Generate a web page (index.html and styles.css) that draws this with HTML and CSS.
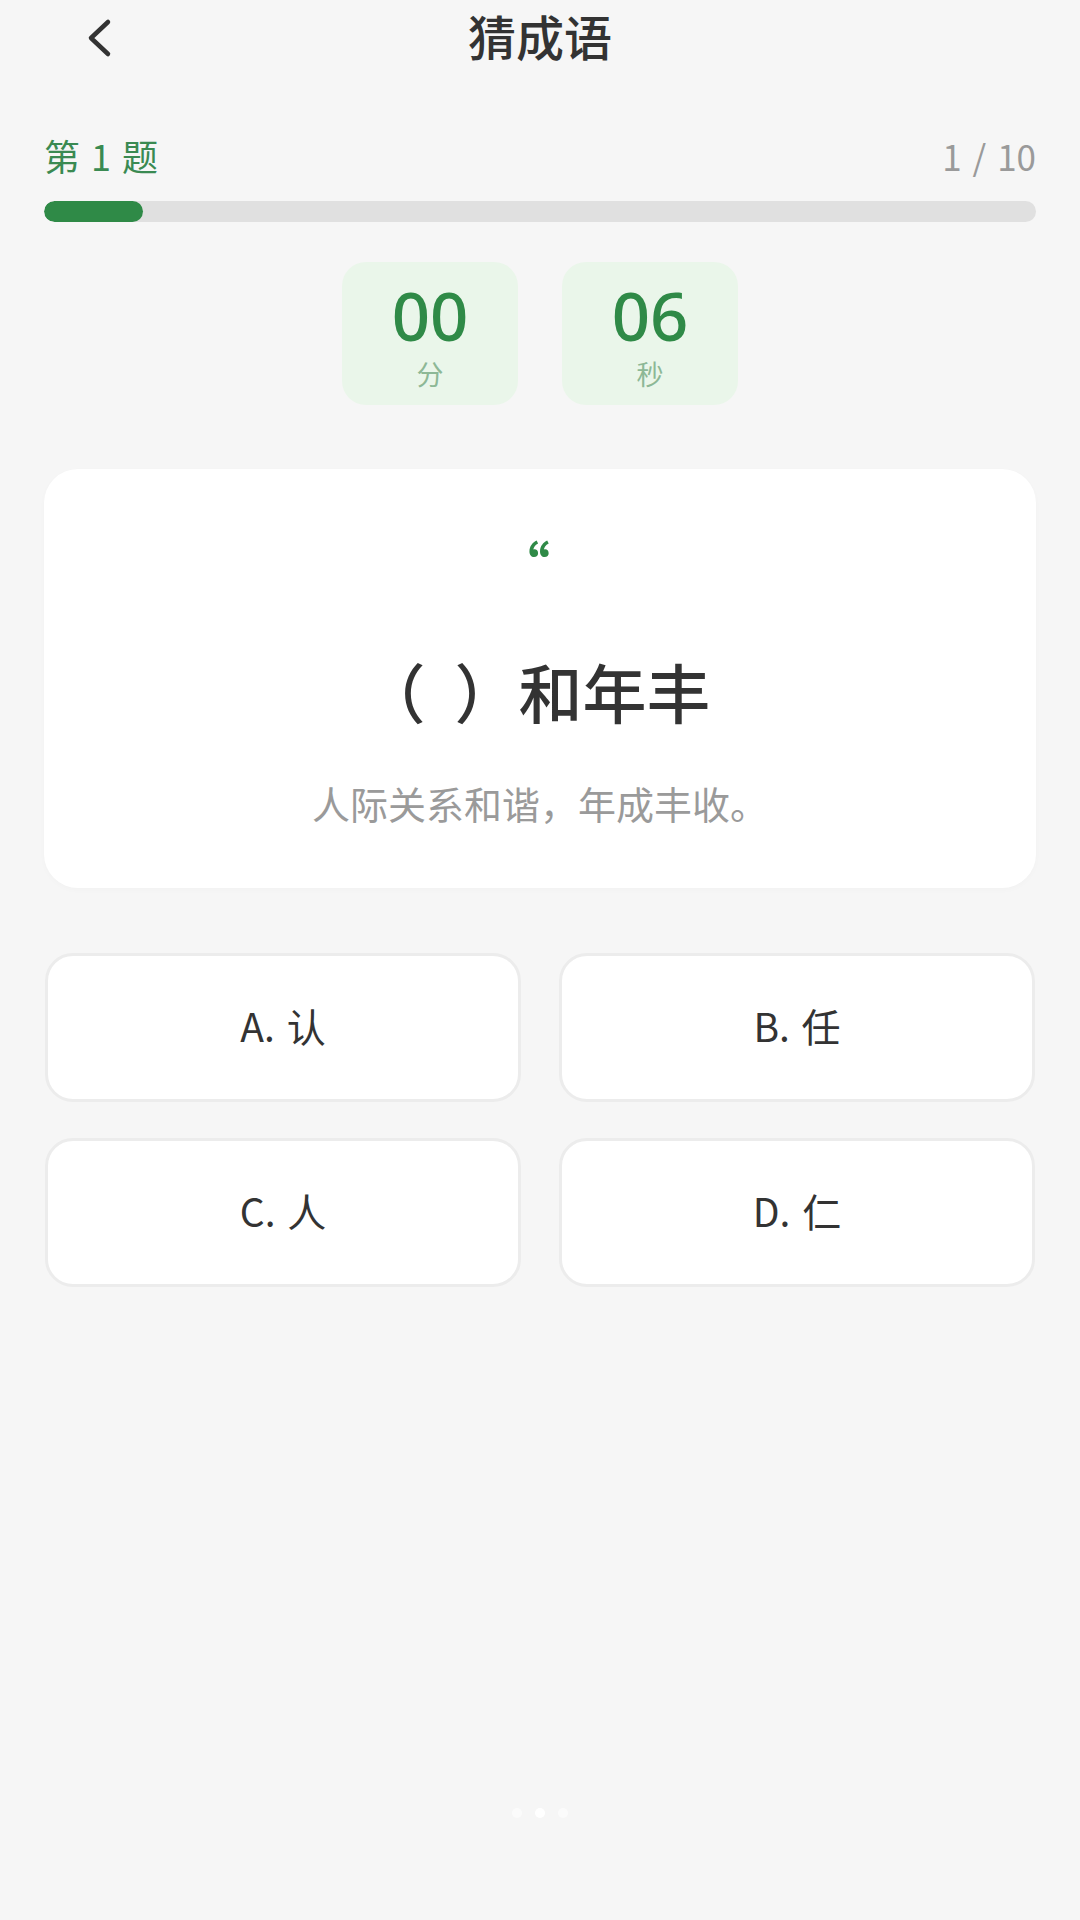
FILE: index.html
```html
<!DOCTYPE html>
<html lang="zh-CN">
<head>
<meta charset="utf-8">
<title>猜成语</title>
<link rel="stylesheet" href="styles.css">
</head>
<body>
<div class="page">
  <header class="header">
    <div class="back">
      <svg width="28" height="40" viewBox="0 0 28 40" aria-hidden="true">
        <polyline points="23,4 6,20 23,36" fill="none" stroke="#333333" stroke-width="4.5" stroke-linecap="round" stroke-linejoin="round"/>
      </svg>
    </div>
    <h1 class="title">猜成语</h1>
    <div></div>
  </header>

  <section class="progress">
    <div class="progress-row">
      <span class="q-no">第 1 题</span>
      <span class="q-count">1 / 10</span>
    </div>
    <div class="bar"><div class="bar-fill" style="width:10%"></div></div>
  </section>

  <section class="timer">
    <div class="t-box"><div class="t-num">00</div><div class="t-label">分</div></div>
    <div class="t-box"><div class="t-num">06</div><div class="t-label">秒</div></div>
  </section>

  <section class="card">
    <div class="quote">&ldquo;</div>
    <div class="idiom">（&nbsp; ）和年丰</div>
    <div class="meaning">人际关系和谐，年成丰收。</div>
  </section>

  <section class="options">
    <div class="opt">A. 认</div>
    <div class="opt">B. 任</div>
    <div class="opt">C. 人</div>
    <div class="opt">D. 仁</div>
  </section>

  <div class="dots">
    <span class="dot"></span><span class="dot active"></span><span class="dot"></span>
  </div>
</div>
</body>
</html>
```

FILE: styles.css
```css
* { box-sizing: border-box; }
html, body { margin: 0; padding: 0; }
body {
  background: #f6f6f6;
  font-family: "Noto Sans CJK SC", "Noto Sans", sans-serif;
  color: #333333;
}
.page {
  width: 1080px;
  min-height: 1920px;
  display: flex;
  flex-direction: column;
}
.header {
  height: 76px;
  display: grid;
  grid-template-columns: 1fr auto 1fr;
  align-items: center;
}
.back {
  padding-left: 85px;
  display: flex;
  align-items: center;
}
.back svg { display: block; }
.title {
  margin: -6px 0 0;
  font-size: 48px;
  font-weight: 500;
  line-height: 76px;
  color: #333333;
}
.progress {
  padding: 0 44px;
  margin-top: 55px;
}
.progress-row {
  display: flex;
  justify-content: space-between;
  align-items: center;
  height: 48px;
}
.q-no {
  font-size: 36px;
  word-spacing: 3px;
  color: #3a8a52;
}
.q-count {
  font-size: 35px;
  word-spacing: 3px;
  color: #9a9a9a;
}
.bar {
  margin-top: 22px;
  height: 21px;
  border-radius: 11px;
  background: #e0e0e0;
  overflow: hidden;
}
.bar-fill {
  height: 100%;
  border-radius: 11px;
  background: #2f8a47;
}
.timer {
  margin-top: 40px;
  display: flex;
  justify-content: center;
  gap: 44px;
}
.t-box {
  width: 176px;
  height: 143px;
  border-radius: 24px;
  background: #eaf6ea;
  display: flex;
  flex-direction: column;
  align-items: center;
  padding-top: 16px;
}
.t-num {
  font-family: "Noto Sans", sans-serif;
  font-weight: 500;
  font-size: 67px;
  line-height: 74px;
  color: #2f8a47;
}
.t-label {
  margin-top: 7px;
  font-size: 27px;
  line-height: 30px;
  color: #8db896;
}
.card {
  margin: 64px 44px 0;
  height: 419px;
  background: #ffffff;
  border-radius: 34px;
  box-shadow: 0 2px 6px rgba(0, 0, 0, 0.02);
  display: flex;
  flex-direction: column;
  align-items: center;
  padding-top: 70px;
}
.quote {
  font-family: "Noto Sans CJK SC", sans-serif;
  font-weight: 700;
  font-size: 52px;
  line-height: 50px;
  height: 50px;
  padding-right: 32px;
  color: #2f8a47;
}
.idiom {
  margin-top: 63px;
  font-size: 64px;
  font-weight: 500;
  line-height: 76px;
  color: #333333;
  padding-right: 8px;
}
.meaning {
  margin-top: 55px;
  font-size: 38px;
  line-height: 40px;
  color: #9a9a9a;
}
.options {
  margin: 65px 45px 0;
  display: grid;
  grid-template-columns: 1fr 1fr;
  column-gap: 38px;
  row-gap: 36px;
}
.opt {
  height: 149px;
  background: #ffffff;
  border: 3px solid #ececec;
  border-radius: 28px;
  display: flex;
  align-items: center;
  justify-content: center;
  font-size: 39px;
  word-spacing: 3px;
  color: #333333;
  padding-bottom: 5px;
}
.dots {
  margin-top: auto;
  padding-bottom: 102px;
  display: flex;
  justify-content: center;
  gap: 13px;
}
.dot {
  width: 10px;
  height: 10px;
  border-radius: 50%;
  background: #fbfbfb;
}
.dot.active { background: #ffffff; }
```
